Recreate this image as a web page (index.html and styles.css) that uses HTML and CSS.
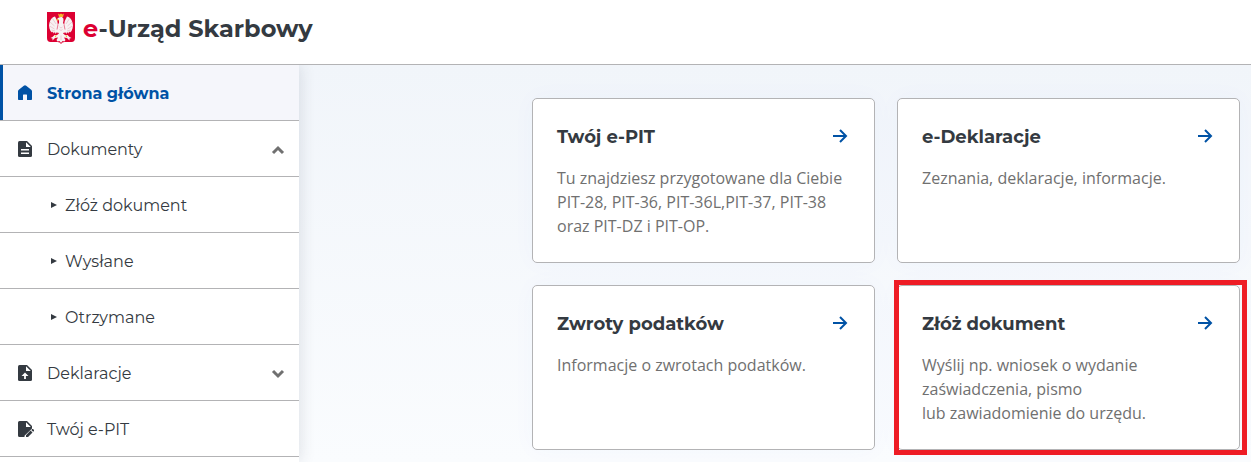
FILE: index.html
```html
<!DOCTYPE html>
<html lang="pl">
<head>
    <meta charset="UTF-8">
    <meta name="viewport" content="width=device-width, initial-scale=1.0">
    <title>e-Urząd Skarbowy</title>
    <link rel="stylesheet" href="styles.css">
</head>
<body>
    <header class="header">
        <a class="brand" href="#">
            <svg class="emblem" viewBox="0 0 56 64" aria-hidden="true">
                <path fill="#dc0032" d="M0 0h56v52q0 8-7 8H35q-5 0-7 4q-2-4-7-4H7q-7 0-7-8z"/>
                <path fill="#f7f2f3" d="M22 27q-1-11-6-18l-3 1-3 2-3 4-2 5-1 6 1 6 2 5 3 3 2-2 1 4 3-3 1 4 3-4 2 3 6-8z"/>
                <path fill="#f7f2f3" d="M34 27q1-11 6-18l3 1 3 2 3 4 2 5 1 6-1 6-2 5-3 3-2-2-1 4-3-3-1 4-3-4-2 3-6-8z"/>
                <path fill="#f7f2f3" d="M20 14q4-5 10-4 4 2 3 7l-1 5 4 5v9l-4 7 4 3 5 0 4 4 4 2-4 1 0 4-5-5-6-1 3 5-2 3-4-1-3 4-3-4-4 1-2-3 3-5-6 1-5 5 0-4-4-1 4-2 4-4 5 0 4-3-4-7v-9l4-5v-5z"/>
                <path fill="none" stroke="#e2a0b0" d="M6 20l9 8M5 28l10 6M9 36l7 2M11 13l7 11M50 20l-9 8M51 28l-10 6M47 36l-7 2M45 13l-7 11M25 30l3 2 3-2M25 35l3 2 3-2M28 47v9"/>
                <path fill="none" stroke="#dc0032" d="M22 25l-2 10M34 25l2 10"/>
                <path fill="#f3b62c" d="M22 3l3 2 3-2 3 2 3-2-2 7h-8zM18 15l6-1-3 4zM16 47l4 0-4 4zM40 47l-4 0 4 4z"/>
            </svg>
            <span class="brand-name"><span class="brand-accent">e</span>-Urząd Skarbowy</span>
        </a>
    </header>
    <div class="layout">
        <nav class="sidebar" aria-label="Menu">
            <ul class="menu">
                <li>
                    <a class="menu-item active" href="#" aria-current="page">
                        <svg class="menu-icon" viewBox="0 0 18 18" aria-hidden="true">
                            <path fill="currentColor" d="M9 1.300q.7 0 1.200.4l5 4q.8.600.8 1.600v7.900q0 .8-.8.8h-3.700q-.5 0-.5-.5V11q0-.5-.5-.5h-3Q7 10.500 7 11v4.500q0 .5-.5.5H2.800q-.8 0-.8-.8V7.300q0-1 .8-1.600l5-4q.5-.4 1.200-.4z"/>
                        </svg>
                        <span>Strona główna</span>
                    </a>
                </li>
                <li>
                    <button class="menu-item" type="button" aria-expanded="true">
                        <svg class="menu-icon" viewBox="0 0 18 18" aria-hidden="true">
                            <path fill="currentColor" d="M3.500 1H11l5 5v9.500q0 1.500-1.500 1.500h-11Q2 17 2 15.500v-13Q2 1 3.500 1z"/>
                            <path fill="#fff" d="M10 2.200L14.800 7H10zM5 9h8v1.500H5zM5 12.500h8V14H5z"/>
                        </svg>
                        <span>Dokumenty</span>
                        <svg class="chevron" viewBox="0 0 14 14" aria-hidden="true"><path d="M2 11l5-5 5 5"/></svg>
                    </button>
                    <ul class="menu">
                        <li><a class="menu-item sub" href="#">Złóż dokument</a></li>
                        <li><a class="menu-item sub" href="#">Wysłane</a></li>
                        <li><a class="menu-item sub" href="#">Otrzymane</a></li>
                    </ul>
                </li>
                <li>
                    <button class="menu-item" type="button" aria-expanded="false">
                        <svg class="menu-icon" viewBox="0 0 18 18" aria-hidden="true">
                            <path fill="currentColor" d="M3.500 1H11l5 5v9.500q0 1.500-1.500 1.500h-11Q2 17 2 15.500v-13Q2 1 3.500 1z"/>
                            <path fill="#fff" d="M10 2.200L14.800 7H10zM9 8.500l3.500 3.500h-2.600v3H8.100v-3H5.500z"/>
                        </svg>
                        <span>Deklaracje</span>
                        <svg class="chevron" viewBox="0 0 14 14" aria-hidden="true"><path d="M2 5l5 5 5-5"/></svg>
                    </button>
                </li>
                <li>
                    <a class="menu-item" href="#">
                        <svg class="menu-icon" viewBox="0 0 18 18" aria-hidden="true">
                            <path fill="currentColor" d="M3.500 1H11l5 5v2.500L8.500 15.800V17h-5Q2 17 2 15.500v-13Q2 1 3.500 1z"/>
                            <path fill="#fff" d="M10 2.200L14.800 7H10z"/>
                            <path fill="currentColor" d="M10 17v-1.800l4.500-4.600 2 2L12 17zM15.300 9.900l.9-.8q.4-.3.800 0l1 1q.3.400 0 .8l-.8.900z"/>
                        </svg>
                        <span>Twój e-PIT</span>
                    </a>
                </li>
            </ul>
        </nav>
        <main class="content">
            <a class="card" href="#">
                <div class="card-head">
                    <h2>Twój e-PIT</h2>
                    <svg class="arrow" viewBox="0 0 20 26" aria-hidden="true"><path d="M3 13h13M10 7l6 6-6 6"/></svg>
                </div>
                <p>Tu znajdziesz przygotowane dla Ciebie PIT-28, PIT-36, PIT-36L,PIT-37, PIT-38 oraz&nbsp;PIT-DZ i PIT-OP.</p>
            </a>
            <a class="card" href="#">
                <div class="card-head">
                    <h2>e-Deklaracje</h2>
                    <svg class="arrow" viewBox="0 0 20 26" aria-hidden="true"><path d="M3 13h13M10 7l6 6-6 6"/></svg>
                </div>
                <p>Zeznania, deklaracje, informacje.</p>
            </a>
            <a class="card" href="#">
                <div class="card-head">
                    <h2>Zwroty podatków</h2>
                    <svg class="arrow" viewBox="0 0 20 26" aria-hidden="true"><path d="M3 13h13M10 7l6 6-6 6"/></svg>
                </div>
                <p>Informacje o zwrotach podatków.</p>
            </a>
            <a class="card marked" href="#">
                <div class="card-head">
                    <h2>Złóż dokument</h2>
                    <svg class="arrow" viewBox="0 0 20 26" aria-hidden="true"><path d="M3 13h13M10 7l6 6-6 6"/></svg>
                </div>
                <p>Wyślij np. wniosek o wydanie zaświadczenia, pismo<br>lub zawiadomienie do urzędu.</p>
            </a>
        </main>
    </div>
</body>
</html>
```
FILE: styles.css
```css
*{
    margin: 0;
    padding: 0;
    box-sizing: border-box;
}
:root{
    --blue: #0052a5;
    --dark: #343a41;
    --line: #b3b3b5;
    --heading: Montserrat, Inter, sans-serif;
}
body{
    min-height: 100vh;
    display: flex;
    flex-direction: column;
    font-family: "Open Sans", sans-serif;
    font-size: 16px;
    color: var(--dark);
    background-color: #fff;
}
a{
    color: inherit;
    text-decoration: none;
}
.header{
    padding: 12px 47px 18px;
    border-bottom: 1px solid var(--line);
}
.brand{
    display: flex;
    align-items: flex-start;
    gap: 8px;
}
.emblem{
    width: 28px;
    height: 32px;
}
.brand-name{
    font: 700 24px/34px var(--heading);
}
.brand-accent{
    color: #dc0032;
}
.layout{
    flex: 1;
    display: flex;
    background: linear-gradient(#f1f5fa, #fafcfe);
}
.sidebar{
    flex: 0 0 299px;
    background-color: #fff;
    box-shadow: 2px 0 14px rgba(40, 50, 70, .12);
    clip-path: inset(0 -20px 0 0);
}
.menu{
    list-style: none;
}
.menu-item{
    width: 100%;
    display: flex;
    align-items: flex-start;
    gap: 13px;
    padding: 16px 14px 13px 16px;
    border: 0;
    border-bottom: 1px solid var(--line);
    background: none;
    font: 400 16px/26px var(--heading);
    color: var(--dark);
    text-align: left;
    cursor: pointer;
}
.menu-item.active{
    background-color: #f5f6fb;
    box-shadow: inset 3px 0 var(--blue);
    font-weight: 700;
    color: var(--blue);
}
.menu-item.sub{
    gap: 8px;
    padding-left: 51px;
}
.menu-item.sub::before{
    content: "";
    margin-top: 9px;
    border: 3px solid transparent;
    border-left: 6px solid var(--dark);
    border-right: 0;
}
.menu-icon{
    width: 18px;
    height: 24px;
}
.chevron{
    width: 14px;
    height: 24px;
    margin-left: auto;
    fill: none;
    stroke: #707070;
    stroke-width: 3;
}
.content{
    flex: 1;
    display: grid;
    grid-template-columns: repeat(2, 1fr);
    align-content: start;
    gap: 22px;
    padding: 33px 11px 12px 233px;
}
.card{
    position: relative;
    padding: 24px;
    border: 1px solid var(--line);
    border-radius: 5px;
    background-color: #fff;
    box-shadow: 0 0 24px rgba(0, 82, 255, .03);
}
.card-head{
    display: flex;
    justify-content: space-between;
    align-items: flex-start;
    margin-bottom: 14px;
}
.card h2{
    font: 700 18px/29px var(--heading);
}
.card p{
    line-height: 24px;
    color: #707070;
}
.arrow{
    width: 20px;
    height: 26px;
    fill: none;
    stroke: var(--blue);
    stroke-width: 2;
}
.card.marked::after{
    content: "";
    position: absolute;
    inset: -6px -8px -6px -4px;
    border: 5px solid #ee1c25;
}
```
